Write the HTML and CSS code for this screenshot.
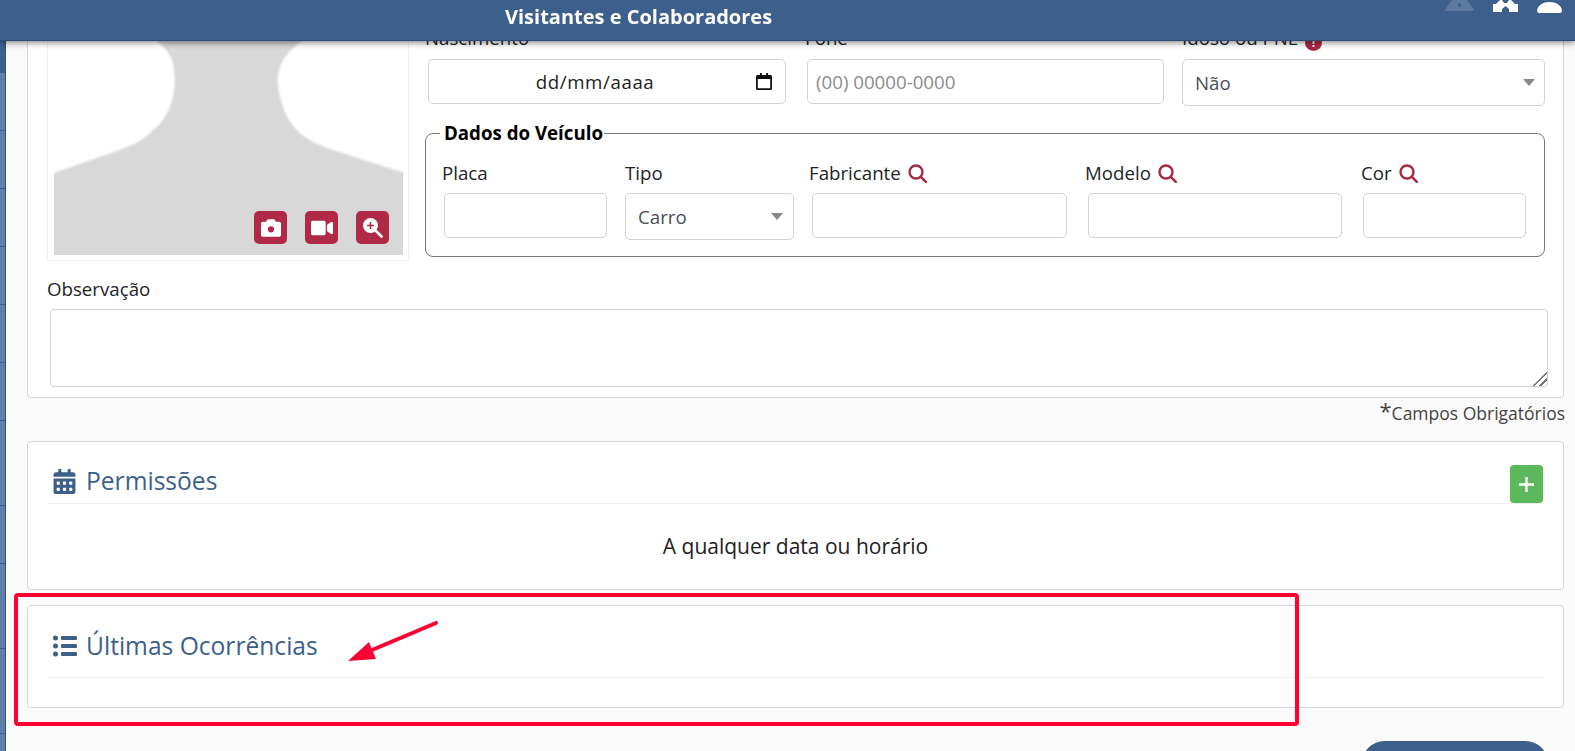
FILE: index.html
```html
<!DOCTYPE html>
<html lang="pt-BR">
<head>
    <meta charset="UTF-8">
    <title>Visitantes e Colaboradores</title>
    <link rel="stylesheet" href="styles.css">
</head>
<body>
    <!-- Top bar -->
    <header class="topbar">
        <h1 class="topbar-title">Visitantes e Colaboradores</h1>
        <div class="topbar-icons">
            <svg class="icon-alert" width="29" height="11" viewBox="0 0 29 11"><path d="M7 0h15l7 9.5q.3 1.500-1.500 1.500h-26q-1.800 0-1.500-1.500z" fill="#5d7ba1"/><circle cx="14.500" cy="5" r="1.700" fill="#3d5f8c"/></svg>
            <svg class="icon-home" width="25" height="12" viewBox="0 0 25 12"><path d="M0 12V4L3 4 7 0H9L11 3H14L16 0H18L22 4 25 4V12H16V9L12.500 6 9 9V12z" fill="#fff"/></svg>
            <svg class="icon-user" width="25" height="14" viewBox="0 0 25 14"><path d="M0 10.500C1 5 6 2 12.500 2S24 5 25 10.500q0 2.500-2.500 2.500h-20Q0 13 0 10.500z" fill="#fff"/></svg>
        </div>
    </header>

    <div class="page">
        <!-- Side menu, only its edge shows -->
        <nav class="sidemenu">
            <div class="menu-item active"></div>
            <div class="menu-item"></div>
            <div class="menu-item"></div>
            <div class="menu-item"></div>
            <div class="menu-item"></div>
            <div class="menu-item"></div>
            <div class="menu-item"></div>
            <div class="menu-item tall"></div>
            <div class="menu-item"></div>
            <div class="menu-item tall"></div>
            <div class="menu-item tall"></div>
        </nav>

        <main class="content">
            <!-- Cadastro -->
            <section class="card card-form">
                <div class="form-top">
                    <div class="photo-frame">
                        <div class="photo">
                            <svg class="photo-bg" width="349" height="222" viewBox="0 -8 349 222">
                                <rect x="0" y="-8" width="349" height="222" fill="#fff"/>
                                <path class="silhouette" d="M103 0C112 8 119 16 120 28C122 44 120 54 116 66C112 76 106 84 99 89C90 98 82 103 73 106C50 115 25 123 -6 134V222H355V133C325 124 300 116 279 109C265 104 255 100 246 92C238 84 232 76 229 66C225 54 223 44 224 34C226 20 234 10 248 0V-8H103z" fill="#d8d8d8"/>
                            </svg>
                            <div class="photo-actions">
                                <button class="btn-photo" type="button"><svg width="20" height="20" viewBox="0 0 512 512"><path fill="#fff" fill-rule="evenodd" d="M512 144v288c0 26.500-21.500 48-48 48H48c-26.500 0-48-21.500-48-48V144c0-26.500 21.500-48 48-48h88l12.300-32.900c7-18.700 24.900-31.100 44.900-31.100h125.500c20 0 37.900 12.400 44.900 31.100L376 96h88c26.500 0 48 21.500 48 48zM256 368a80 80 0 1 0 0-160 80 80 0 0 0 0 160z"/></svg></button>
                                <button class="btn-photo" type="button"><svg width="22" height="20" viewBox="0 0 576 512"><path fill="#fff" d="M336.200 64H47.800C21.400 64 0 85.400 0 111.800v288.400C0 426.600 21.400 448 47.800 448h288.400c26.400 0 47.800-21.400 47.800-47.800V111.800c0-26.400-21.400-47.800-47.800-47.800zm189.400 37.700L416 177.300v157.400l109.600 75.500c21.200 14.600 50.400-.3 50.400-25.800V127.500c0-25.400-29.100-40.400-50.400-25.800z"/></svg></button>
                                <button class="btn-photo" type="button"><svg width="21" height="21" viewBox="0 0 21 21"><circle cx="8.500" cy="8.500" r="7.500" fill="#fff"/><path d="M14 14l5.500 5.500" stroke="#fff" stroke-width="2.600" stroke-linecap="round"/><path d="M8.500 5v7M5 8.500h7" stroke="#b02a47" stroke-width="1.600"/></svg></button>
                            </div>
                        </div>
                    </div>

                    <div class="form-fields">
                        <div class="row-main">
                            <div class="field">
                                <label class="field-label">Nascimento</label>
                                <div class="input date-input">
                                    <span class="date-text">dd/mm/aaaa</span>
                                    <svg width="16" height="17" viewBox="0 0 16 17"><path d="M4 0v2H1.500Q0 2 0 3.500v12Q0 17 1.500 17h13q1.500 0 1.500-1.500v-12Q16 2 14.500 2H12V0h-1.800v2H5.800V0zM1.800 6h12.400v9.200H1.800z" fill="#111"/></svg>
                                </div>
                            </div>
                            <div class="field">
                                <label class="field-label">Fone</label>
                                <input class="input phone-input" type="text" placeholder="(00) 00000-0000">
                            </div>
                            <div class="field">
                                <label class="field-label">Idoso ou PNE <span class="info-dot">!</span></label>
                                <div class="select-box select-idoso">
                                    <select class="select"><option>Não</option><option>Sim</option></select>
                                </div>
                            </div>
                        </div>

                        <fieldset class="vehicle">
                            <legend>Dados do Veículo</legend>
                            <div class="vehicle-grid">
                                <div class="field">
                                    <label class="field-label">Placa</label>
                                    <input class="input input-short" type="text">
                                </div>
                                <div class="field">
                                    <label class="field-label">Tipo</label>
                                    <div class="select-box select-tipo">
                                        <select class="select"><option>Carro</option><option>Moto</option></select>
                                    </div>
                                </div>
                                <div class="field">
                                    <label class="field-label">Fabricante <svg class="icon-search" width="19" height="19" viewBox="0 0 19 19"><circle cx="8" cy="8" r="6.500" fill="none" stroke="#a82a45" stroke-width="2.400"/><path d="M12.800 12.800l5 5" stroke="#a82a45" stroke-width="2.600" stroke-linecap="round"/></svg></label>
                                    <input class="input input-long" type="text">
                                </div>
                                <div class="field">
                                    <label class="field-label">Modelo <svg class="icon-search" width="19" height="19" viewBox="0 0 19 19"><circle cx="8" cy="8" r="6.500" fill="none" stroke="#a82a45" stroke-width="2.400"/><path d="M12.800 12.800l5 5" stroke="#a82a45" stroke-width="2.600" stroke-linecap="round"/></svg></label>
                                    <input class="input input-long input-modelo" type="text">
                                </div>
                                <div class="field">
                                    <label class="field-label">Cor <svg class="icon-search" width="19" height="19" viewBox="0 0 19 19"><circle cx="8" cy="8" r="6.500" fill="none" stroke="#a82a45" stroke-width="2.400"/><path d="M12.800 12.800l5 5" stroke="#a82a45" stroke-width="2.600" stroke-linecap="round"/></svg></label>
                                    <input class="input input-short" type="text">
                                </div>
                            </div>
                        </fieldset>
                    </div>
                </div>

                <label class="field-label obs-label">Observação</label>
                <textarea class="obs-text"></textarea>
            </section>

            <p class="required-note"><span class="star">*</span>Campos Obrigatórios</p>

            <!-- Permissoes -->
            <section class="card card-perm">
                <div class="card-title">
                    <svg width="23" height="25" viewBox="0 0 448 512"><path fill="#3d5f8c" d="M0 464c0 26.500 21.500 48 48 48h352c26.500 0 48-21.500 48-48V192H0v272zm320-196c0-6.600 5.400-12 12-12h40c6.600 0 12 5.400 12 12v40c0 6.600-5.400 12-12 12h-40c-6.600 0-12-5.400-12-12v-40zm0 128c0-6.600 5.400-12 12-12h40c6.600 0 12 5.400 12 12v40c0 6.600-5.400 12-12 12h-40c-6.600 0-12-5.400-12-12v-40zM192 268c0-6.600 5.400-12 12-12h40c6.600 0 12 5.400 12 12v40c0 6.600-5.400 12-12 12h-40c-6.600 0-12-5.400-12-12v-40zm0 128c0-6.600 5.400-12 12-12h40c6.600 0 12 5.400 12 12v40c0 6.600-5.400 12-12 12h-40c-6.600 0-12-5.400-12-12v-40zM64 268c0-6.600 5.400-12 12-12h40c6.600 0 12 5.400 12 12v40c0 6.600-5.400 12-12 12H76c-6.600 0-12-5.400-12-12v-40zm0 128c0-6.600 5.400-12 12-12h40c6.600 0 12 5.400 12 12v40c0 6.600-5.400 12-12 12H76c-6.600 0-12-5.400-12-12v-40zM400 64h-48V16c0-8.800-7.200-16-16-16h-32c-8.800 0-16 7.200-16 16v48H160V16c0-8.800-7.200-16-16-16h-32c-8.800 0-16 7.200-16 16v48H48C21.500 64 0 85.500 0 112v48h448v-48c0-26.500-21.500-48-48-48z"/></svg>
                    <h2>Permissões</h2>
                    <button class="btn-add" type="button"><svg width="15" height="15" viewBox="0 0 15 15"><path d="M7.500 0v15M0 7.500h15" stroke="#fff" stroke-width="2.400"/></svg></button>
                </div>
                <p class="perm-text">A qualquer data ou horário</p>
            </section>

            <!-- Ocorrencias -->
            <section class="card card-occ">
                <div class="card-title">
                    <svg width="24" height="22" viewBox="0 0 24 22"><g fill="#3d5f8c"><circle cx="2.500" cy="3" r="2.500"/><circle cx="2.500" cy="11" r="2.500"/><circle cx="2.500" cy="19" r="2.500"/><rect x="8" y="1" width="16" height="4" rx="1"/><rect x="8" y="9" width="16" height="4" rx="1"/><rect x="8" y="17" width="16" height="4" rx="1"/></g></svg>
                    <h2>Últimas Ocorrências</h2>
                </div>
            </section>

            <div class="actions">
                <button class="btn-save" type="button"></button>
            </div>
        </main>
    </div>

    <!-- Red markup drawn on top of the screenshot -->
    <svg class="markup" width="1575" height="751" viewBox="0 0 1575 751">
        <rect x="16" y="595" width="1281" height="129" rx="2" fill="none" stroke="#ff0033" stroke-width="4"/>
        <path d="M436 623L372 650" stroke="#ff0033" stroke-width="4" stroke-linecap="round"/>
        <path d="M348 661L369 642L376 659z" fill="#ff0033"/>
    </svg>
</body>
</html>
```

FILE: styles.css
```css
* { margin: 0; padding: 0; box-sizing: border-box; }
html, body { height: 100%; overflow: hidden; }
body { background-color: #fafafa; font-family: 'Open Sans', sans-serif; font-size: 18.7px; line-height: 24px; color: #212529; }

.topbar { position: fixed; top: 0; left: 0; right: 0; height: 41px; z-index: 5; display: flex; justify-content: space-between; align-items: flex-start; padding-left: 505px; background-color: #3d5f8c; border-bottom: 1px solid #2e4a70; box-shadow: 0 2px 6px rgba(0,0,0,0.45); }
.topbar-title { font-size: 20px; line-height: 34px; font-weight: 700; color: white; }
.topbar-icons { display: flex; align-items: flex-start; gap: 19px; padding-right: 13px; }

.page { display: flex; height: 751px; overflow: hidden; }

.sidemenu { width: 6px; flex-shrink: 0; padding-top: 41px; background-color: #5f7ea8; border-right: 1px solid #2f5480; }
.menu-item { height: 58px; border-bottom: 1px solid #3d5f8c; }
.menu-item.active { height: 32px; background-color: #3d5f8c; }
.menu-item.tall { height: 85px; }

.content { flex: 1; padding: 0 11px 0 21px; }

.card { background: white; border: 1px solid #d3d6db; border-radius: 4px; }
.card-form { margin-top: -10px; height: 408px; padding: 35px 0 0 19px; }
.form-top { display: grid; grid-template-columns: 362px 1119px; column-gap: 16px; }

.photo-frame { height: 235px; padding: 6px 6px 5px; border: 1px solid #eee; }
.photo { position: relative; height: 222px; }
.photo-bg { display: block; }
.silhouette { filter: blur(1px); }
.photo-actions { position: absolute; right: 13px; bottom: 11px; display: flex; gap: 18px; }
.btn-photo { width: 33px; height: 33px; display: flex; align-items: center; justify-content: center; background-color: #b02a47; border: none; border-radius: 5px; }

.field-label { display: block; height: 24px; white-space: nowrap; }
.input { display: block; height: 45px; background: white; border: 1px solid #ced4da; border-radius: 5px; font-family: inherit; font-size: 18.7px; color: #222; }
.row-main { display: grid; grid-template-columns: 380px 377px 362px; }
.row-main .field-label { margin-bottom: 9px; }
.date-input { display: flex; align-items: center; width: 358px; margin-left: 3px; padding: 0 13px 0 12px; }
.date-text { flex: 1; text-align: center; padding-right: 7px; letter-spacing: 0.6px; }
.phone-input { width: 357px; margin-left: 2px; padding: 0 8px; }
.phone-input::placeholder { color: #8b8b8b; }
.info-dot { display: inline-block; width: 17px; height: 17px; margin-left: 2px; border-radius: 50%; background-color: #a82a45; color: white; font-size: 12px; font-weight: 700; line-height: 17px; text-align: center; vertical-align: -2px; }

.select-box { position: relative; height: 47px; }
.select-box::after { content: ""; position: absolute; right: 10px; top: 20px; border-left: 6px solid transparent; border-right: 6px solid transparent; border-top: 7px solid #888; }
.select { width: 100%; height: 100%; appearance: none; background: white; border: 1px solid #ced4da; border-radius: 5px; padding: 0 12px; font-family: inherit; font-size: 18.7px; color: #495057; }
.select-idoso { width: 363px; }
.select-tipo { width: 169px; }
.select-tipo::after { right: 11px; }

.vehicle { height: 136px; margin-top: 15px; padding: 16px 0 0 16px; border: 1px solid #777; border-radius: 8px; }
.vehicle legend { margin-left: -2px; padding: 0 1px 0 4px; font-weight: 700; font-size: 18.7px; color: black; }
.vehicle-grid { display: grid; grid-template-columns: 183px 184px 276px 276px 183px; }
.vehicle-grid .field-label { margin-bottom: 8px; }
.input-short { width: 163px; margin-left: 2px; }
.input-long { width: 255px; margin-left: 3px; }
.input-modelo { width: 254px; }
.icon-search { vertical-align: -3px; margin-left: 2px; }

.obs-label { margin-top: 16px; margin-bottom: 8px; }
.obs-text { display: block; width: 1498px; height: 78px; margin-left: 3px; border: 1px solid #ced4da; border-radius: 4px; background: white; }
.obs-text::-webkit-resizer { background: linear-gradient(135deg, transparent 50%, #777 50%, #777 58%, transparent 58%, transparent 72%, #777 72%, #777 80%, transparent 80%); }

.required-note { height: 43px; text-align: right; font-size: 17.5px; color: #444; white-space: nowrap; margin-right: -1px; }
.star { font-size: 22px; vertical-align: 1px; }

.card-title { position: relative; display: flex; align-items: center; gap: 10px; margin: 0 20px; padding-left: 4px; border-bottom: 1px solid #eee; }
.card-title h2 { font-size: 24.6px; line-height: 32px; font-weight: 400; color: #3d5f8c; }

.card-perm { height: 149px; padding-top: 23px; }
.card-perm .card-title { height: 39px; padding-left: 5px; padding-bottom: 6px; }
.btn-add { position: absolute; right: 0; bottom: 0; width: 33px; height: 38px; display: flex; align-items: center; justify-content: center; background-color: #5cb85c; border: none; border-radius: 4px; }
.perm-text { margin-top: 30px; text-align: center; font-size: 21px; color: #222; }

.card-occ { height: 103px; margin-top: 15px; padding-top: 24px; }
.card-occ .card-title { height: 48px; padding-left: 5px; padding-bottom: 16px; gap: 9px; }

.actions { display: flex; justify-content: flex-end; margin-top: 33px; padding-right: 16px; }
.btn-save { width: 186px; height: 45px; background-color: #3d5f8c; border: none; border-radius: 23px; }

.markup { position: fixed; top: 0; left: 0; z-index: 6; pointer-events: none; }
```
